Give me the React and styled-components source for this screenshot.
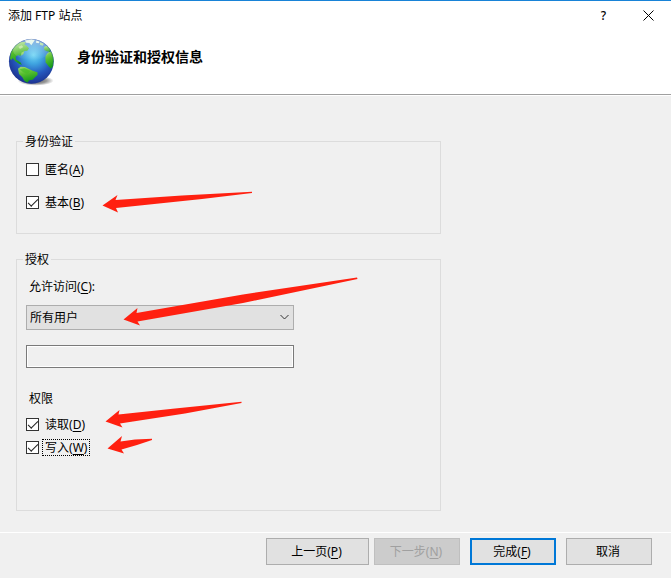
import React from "react";
import styled, { createGlobalStyle } from "styled-components";

const GlobalStyle = createGlobalStyle`
  *, *::before, *::after { box-sizing: border-box; }
  html, body, #root { height: 100%; }
  body {
    margin: 0;
    background: #f0f0f0;
    color: #000;
    font: 12px/17px "Noto Sans", "Noto Sans CJK SC", sans-serif;
  }
  button, input, select { font: inherit; color: inherit; }
`;

const Dialog = styled.main`
  display: flex;
  flex-direction: column;
  min-height: 100%;
  border-top: 1px solid #1883d7;
`;

const Header = styled.header`
  background: #fff;
  border-bottom: 1px solid #a0a0a0;
  box-shadow: 0 1px 0 #fff;
`;

const TitleBar = styled.div`
  display: flex;
  align-items: center;
  height: 29px;
  padding-left: 8px;
`;

const WindowTitle = styled.span`
  flex: 1;
`;

const CaptionButton = styled.button`
  display: grid;
  place-items: center;
  width: 45px;
  height: 29px;
  padding: 0;
  border: 0;
  background: transparent;
  font-weight: 500;
`;

const Banner = styled.div`
  display: flex;
  align-items: flex-start;
  gap: 21px;
  height: 64px;
  padding: 8px 8px 0;
`;

const Heading = styled.h1`
  margin: 9px 0 0;
  font-size: 14px;
  line-height: 20px;
  font-weight: 700;
`;

const Content = styled.div`
  flex: 1;
  display: flex;
  flex-direction: column;
  gap: 17px;
  padding: 38px 16px 20px;
`;

const Group = styled.fieldset`
  width: 100%;
  max-width: 425px;
  min-width: 0;
  margin: 0;
  padding: 0 6px;
  border: 1px solid #dcdcdc;
`;

const GroupTitle = styled.legend`
  padding: 0 2px;
`;

const GroupBody = styled.div`
  display: flex;
  flex-direction: column;
  align-items: flex-start;
  gap: ${(p) => p.$gap}px;
  padding: ${(p) => p.$pad};
`;

const Stack = styled.div`
  display: flex;
  flex-direction: column;
  gap: ${(p) => p.$gap}px;
  width: 100%;
  max-width: 268px;
`;

const FieldLabel = styled.label`
  padding-left: 3px;
`;

const Caption = styled.span`
  padding-left: 3px;
`;

const Anchor = styled.div`
  position: relative;
`;

const CheckRow = styled.label`
  display: flex;
  align-items: center;
  gap: 3px;
  width: max-content;
`;

const CheckBox = styled.input`
  appearance: none;
  width: 13px;
  height: 13px;
  margin: 0;
  border: 1px solid #333;
  background: #fff;
  outline: none;
  display: grid;
  place-items: center;

  &:checked::before {
    content: "";
    width: 10px;
    height: 5px;
    border: solid #222;
    border-width: 0 0 1px 1px;
    transform: translateY(-1px) rotate(-45deg);
  }
`;

const CheckText = styled.span`
  padding: 0 3px;
  outline: ${(p) => (p.$focused ? "1px dotted #000" : "none")};
  outline-offset: -1px;
`;

const SelectBox = styled.div`
  position: relative;
  height: 25px;
`;

const Select = styled.select`
  appearance: none;
  width: 100%;
  height: 25px;
  padding: 0 24px 0 3px;
  border: 1px solid #adadad;
  border-radius: 0;
  background: #e1e1e1;
`;

const SelectArrow = styled.svg`
  position: absolute;
  right: 5px;
  top: 9px;
  pointer-events: none;
`;

const TextBox = styled.input`
  width: 100%;
  height: 23px;
  padding: 0 4px;
  border: 1px solid #7a7a7a;
  background: #f0f0f0;
  box-shadow: inset 0 0 0 1px #fff;
`;

const Footer = styled.footer`
  display: flex;
  justify-content: flex-end;
  gap: 10px;
  padding: 5px 19px 13px;
  border-top: 1px solid #fff;
`;

const ButtonPair = styled.div`
  display: flex;
  gap: 5px;
`;

const Button = styled.button`
  width: ${(p) => (p.$wide ? 103 : 86)}px;
  height: 27px;
  padding: 0 2px 0 0;
  border: ${(p) => (p.$primary ? "2px solid #0078d7" : "1px solid #adadad")};
  background: #e1e1e1;

  &:disabled {
    border-color: #bfbfbf;
    background: #ccc;
    color: #a0a0a0;
  }
`;

const Key = styled.span`
  text-decoration: underline;
  text-underline-offset: 2px;
`;

const Arrow = styled.svg`
  position: absolute;
  left: ${(p) => p.$left}px;
  top: ${(p) => p.$top}px;
  fill: #ff2010;
  pointer-events: none;
  z-index: 1;
`;

function Pointer({ left, top, width, height, points }) {
  return (
    <Arrow
      $left={left}
      $top={top}
      width={width}
      height={height}
      viewBox={`0 0 ${width} ${height}`}
      aria-hidden="true"
    >
      <polygon points={points} />
    </Arrow>
  );
}

function Check({ text, hotkey, focused, ...rest }) {
  return (
    <CheckRow>
      <CheckBox type="checkbox" {...rest} />
      <CheckText $focused={focused}>
        {text}(<Key>{hotkey}</Key>)
      </CheckText>
    </CheckRow>
  );
}

function Globe() {
  return (
    <svg width="48" height="48" viewBox="24 24 144 144" aria-hidden="true">
      <defs>
        <radialGradient id="sea" cx="0.55" cy="0.36" r="0.66">
          <stop offset="0" stopColor="#72d6f5" />
          <stop offset="0.3" stopColor="#3fa4e0" />
          <stop offset="0.65" stopColor="#2557bd" />
          <stop offset="1" stopColor="#1c2f8c" />
        </radialGradient>
        <linearGradient id="land" x1="0" y1="0" x2="0.3" y2="1">
          <stop offset="0" stopColor="#a2dc72" />
          <stop offset="0.5" stopColor="#55bd2e" />
          <stop offset="1" stopColor="#169a1c" />
        </linearGradient>
        <linearGradient id="gloss" x1="0" y1="0" x2="0" y2="1">
          <stop offset="0" stopColor="#fff" stopOpacity="0.5" />
          <stop offset="1" stopColor="#fff" stopOpacity="0" />
        </linearGradient>
        <radialGradient id="shade">
          <stop offset="0" stopColor="#000" stopOpacity="0.65" />
          <stop offset="0.6" stopColor="#000" stopOpacity="0.4" />
          <stop offset="1" stopColor="#000" stopOpacity="0" />
        </radialGradient>
        <clipPath id="disc">
          <circle cx="94" cy="94" r="67" />
        </clipPath>
      </defs>
      <ellipse cx="107" cy="152" rx="54" ry="15" fill="url(#shade)" />
      <circle cx="94" cy="94" r="67" fill="url(#sea)" />
      <g clipPath="url(#disc)">
        <g fill="url(#land)">
          <path d="M30 86 L32 66 L44 46 L62 35 L78 36 L73 43 L80 47 L87 55 L82 62 L74 63 L66 70 L61 78 L55 75 L48 79 L47 88 L54 92 L61 97 L66 104 L58 102 L46 94 L38 84 L34 91 Z" />
          <path d="M54 116 L62 110 L75 111 L87 117 L98 122 L112 127 L113 134 L105 142 L98 149 L88 151 L82 158 L73 152 L67 142 L57 132 Z" />
          <path d="M136 80 L141 71 L150 64 L157 68 L162 88 L160 108 L153 116 L145 108 L137 97 Z" />
          <path d="M132 51 L140 47 L153 59 L149 66 L141 64 L133 60 Z" />
        </g>
        <g fill="#d8f2e2">
          <path d="M74 31 L91 26 L105 29 L100 37 L94 46 L88 39 L79 38 Z" />
          <path d="M109 31 L119 35 L116 40 L108 38 Z" />
          <path d="M121 37 L131 41 L128 47 L119 44 Z" fill="#9ad78b" />
          <path d="M64 68 L73 64 L70 72 L64 77 Z" fill="#91d65f" />
        </g>
        <path d="M55 50 L65 46 L70 51 L60 57 Z" fill="#c5e6a0" opacity="0.75" />
        <path d="M59 118 L74 115 L91 123 L82 131 L70 127 Z" fill="#46be25" opacity="0.7" />
        <ellipse cx="94" cy="58" rx="56" ry="32" fill="url(#gloss)" />
      </g>
      <circle cx="94" cy="94" r="66" fill="none" stroke="#203a96" strokeOpacity="0.4" strokeWidth="2" />
    </svg>
  );
}

export default function App() {
  return (
    <>
      <GlobalStyle />
      <Dialog>
        <Header>
          <TitleBar>
            <WindowTitle>添加 FTP 站点</WindowTitle>
            <CaptionButton type="button">?</CaptionButton>
            <CaptionButton type="button" aria-label="关闭">
              <svg width="11" height="11" viewBox="0 0 11 11" stroke="#000" fill="none">
                <path d="M0.5 0.5 L10.5 10.5 M10.5 0.5 L0.5 10.5" />
              </svg>
            </CaptionButton>
          </TitleBar>
          <Banner>
            <Globe />
            <Heading>身份验证和授权信息</Heading>
          </Banner>
        </Header>

        <Content>
          <Group>
            <GroupTitle>身份验证</GroupTitle>
            <GroupBody $gap={16} $pad="11px 3px 22px">
              <Check text="匿名" hotkey="A" />
              <Anchor>
                <Check text="基本" hotkey="B" defaultChecked />
                <Pointer
                  left={76}
                  top={-3}
                  width={151}
                  height={22}
                  points="0.5,14.5 15.5,4 13.5,9 80,4.5 150,0.8 150,2 100,8 14,17 16,21.5"
                />
              </Anchor>
            </GroupBody>
          </Group>

          <Group>
            <GroupTitle>授权</GroupTitle>
            <GroupBody $gap={22} $pad="10px 3px 54px">
              <Stack $gap={15}>
                <Stack $gap={10}>
                  <FieldLabel htmlFor="access">
                    允许访问(<Key>C</Key>):
                  </FieldLabel>
                  <SelectBox>
                    <Select id="access" defaultValue="all">
                      <option value="all">所有用户</option>
                    </Select>
                    <SelectArrow width="9" height="7" viewBox="0 0 9 7" fill="none" stroke="#333">
                      <path d="M0.5 1 L4.5 5 L8.5 1" />
                    </SelectArrow>
                    <Pointer
                      left={97}
                      top={-28}
                      width={235}
                      height={49}
                      points="0.5,42.5 14.5,31 13.5,36 120,17.5 234,0.5 234.5,2 120,26 14.5,44.5 17,48.5"
                    />
                  </SelectBox>
                </Stack>
                <TextBox type="text" aria-label="指定的角色或用户" disabled />
              </Stack>
              <Stack $gap={9}>
                <Caption>权限</Caption>
                <Stack $gap={6}>
                  <Anchor>
                    <Check text="读取" hotkey="D" defaultChecked />
                    <Pointer
                      left={79}
                      top={-15}
                      width={138}
                      height={28}
                      points="0.5,20.5 14.5,9 13.5,13.5 70,7.5 136.5,0.8 136.5,2 80,12.5 15,22.5 17.5,26.5"
                    />
                  </Anchor>
                  <Anchor>
                    <Check text="写入" hotkey="W" focused defaultChecked />
                    <Pointer
                      left={81}
                      top={-4}
                      width={46}
                      height={20}
                      points="0.5,13.5 15,1 13.5,6.5 28,4.5 45,3.8 45,5 30,10 14.5,14.5 17,18.5"
                    />
                  </Anchor>
                </Stack>
              </Stack>
            </GroupBody>
          </Group>
        </Content>

        <Footer>
          <ButtonPair>
            <Button type="button" $wide>
              上一页(<Key>P</Key>)
            </Button>
            <Button type="button" disabled>
              下一步(<Key>N</Key>)
            </Button>
          </ButtonPair>
          <Button type="submit" $primary>
            完成(<Key>F</Key>)
          </Button>
          <Button type="button">取消</Button>
        </Footer>
      </Dialog>
    </>
  );
}
